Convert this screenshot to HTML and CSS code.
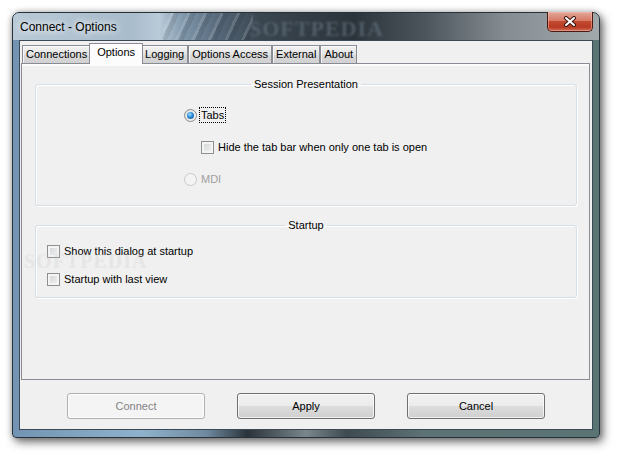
FILE: index.html
```html
<!DOCTYPE html>
<html lang="en">
<head>
    <meta charset="UTF-8">
    <title>Connect - Options</title>
    <link rel="stylesheet" href="styles.css">
</head>
<body>
    <div class="window">
        <div class="titlebar">
            <span class="title">Connect - Options</span>
            <span class="brand">SOFTPEDIA</span>
            <button class="close" type="button">
                <svg width="14" height="11" viewBox="0 0 14 11">
                    <path d="M3 2 L11 9 M11 2 L3 9" stroke="#3b1510" stroke-width="4" stroke-linecap="round"/>
                    <path d="M3 2 L11 9 M11 2 L3 9" stroke="#fff" stroke-width="2" stroke-linecap="round"/>
                </svg>
            </button>
        </div>

        <div class="client">
            <div class="tabs">
                <span class="tab">Connections</span>
                <span class="tab active">Options</span>
                <span class="tab">Logging</span>
                <span class="tab">Options Access</span>
                <span class="tab">External</span>
                <span class="tab">About</span>
            </div>

            <div class="panel">
                <fieldset class="group session">
                    <legend>Session Presentation</legend>
                    <div class="row opt">
                        <span class="radio checked"></span>
                        <span class="lbl focus">Tabs</span>
                    </div>
                    <div class="row sub">
                        <span class="check"></span>
                        <span class="lbl">Hide the tab bar when only one tab is open</span>
                    </div>
                    <div class="row opt disabled">
                        <span class="radio"></span>
                        <span class="lbl">MDI</span>
                    </div>
                </fieldset>

                <fieldset class="group startup">
                    <legend>Startup</legend>
                    <div class="row">
                        <span class="check"></span>
                        <span class="lbl">Show this dialog at startup</span>
                    </div>
                    <div class="row">
                        <span class="check"></span>
                        <span class="lbl">Startup with last view</span>
                    </div>
                    <span class="mark">SOFTPEDIA</span>
                </fieldset>
            </div>

            <div class="footer">
                <button type="button" class="btn" disabled>Connect</button>
                <button type="button" class="btn">Apply</button>
                <button type="button" class="btn">Cancel</button>
            </div>
        </div>
    </div>
</body>
</html>
```

FILE: styles.css
```css
body {
    margin: 0;
    height: 457px;
    overflow: hidden;
    background: #fff;
    font-family: "Liberation Sans", Arial, sans-serif;
    font-size: 11px;
    color: #000;
}

/* window frame */
.window {
    margin: 12px 0 0 12px;
    width: 588px;
    height: 426px;
    box-sizing: border-box;
    display: flex;
    flex-direction: column;
    padding: 0 6px 7px;
    border: 1px solid #27323b;
    border-radius: 7px 7px 4px 4px;
    background: linear-gradient(to right, #7294b2 0%, #8fb2cc 22%, #6f8aa0 33%, #2a333a 40%, #7a868c 50%, #3e4a50 57%, #5d7274 70%, #5a7474 100%);
    box-shadow: 3px 4px 10px rgba(0, 0, 0, 0.55), 0 0 6px rgba(0, 0, 0, 0.25);
}
.titlebar {
    position: relative;
    height: 27px;
    display: flex;
    align-items: center;
    justify-content: space-between;
    margin: 0 -6px;
    padding: 0 6px 0 7px;
    border-radius: 6px 6px 0 0;
    background:
        repeating-linear-gradient(115deg, rgba(255,255,255,0) 0 7px, rgba(255,255,255,0.14) 7px 10px, rgba(0,0,0,0.1) 10px 15px),
        linear-gradient(to right, #b9c9d6 0%, #a9bccc 20%, #b9cad8 25%, #8198ac 29%, #56687a 35%, #3a4650 42%, #2c343b 58%, #4b545b 70%, #858d92 84%, #a2a9ad 100%);
    background-size: 90px 100%, 100% 100%;
    background-position: 150px 0, 0 0;
    background-repeat: no-repeat;
}
.title {
    font-size: 12px;
    text-shadow: 0 0 6px #fff, 0 0 10px rgba(255, 255, 255, 0.8);
}
.brand {
    position: absolute;
    left: 236px;
    top: 3px;
    font-family: "Liberation Serif", serif;
    font-weight: bold;
    font-size: 22px;
    letter-spacing: 1px;
    color: rgba(110, 125, 140, 0.5);
    filter: blur(0.8px);
}
.close {
    align-self: flex-start;
    margin-top: -1px;
    width: 46px;
    height: 20px;
    padding: 0;
    display: flex;
    align-items: center;
    justify-content: center;
    border: 1px solid #4a1a12;
    border-top: none;
    border-radius: 0 0 5px 5px;
    background: linear-gradient(#e4a898 0%, #d77a66 45%, #c24a30 50%, #b83a22 80%, #d0705a 100%);
    box-shadow: inset 0 0 0 1px rgba(255, 200, 190, 0.45);
}

/* client area */
.client {
    flex: 1;
    display: flex;
    flex-direction: column;
    background: #f0f0f0;
    border: 1px solid #3b4856;
}
.tabs {
    display: flex;
    align-items: flex-end;
    height: 22px;
    padding-left: 2px;
}
.tab {
    height: 17px;
    line-height: 17px;
    padding: 0 3px;
    border: 1px solid #898c95;
    border-bottom: none;
    background: linear-gradient(#f2f2f2, #e3e3e3 50%, #d9d9d9 51%, #d1d1d1);
    box-shadow: inset 1px 1px 0 rgba(255, 255, 255, 0.7);
}
.tab.active {
    position: relative;
    z-index: 1;
    height: 20px;
    line-height: 17px;
    margin: 0 -2px -1px;
    padding: 0 7px;
    background: #fcfcfc;
    box-shadow: none;
}
.panel {
    flex: 1;
    margin: 0 2px 0 1px;
    padding: 14px 12px 0 13px;
    border: 1px solid #898c95;
    background: linear-gradient(#fcfcfc 0 2px, #f0f0f0 2px);
}

/* group boxes */
.group {
    position: relative;
    margin: 0;
    min-width: 0;
    display: flex;
    flex-direction: column;
    border: 1px solid #d5dfe5;
    border-radius: 3px;
    box-shadow: inset 1px 1px 0 #fff, 1px 1px 0 #fff;
}
.group legend {
    margin: 0 auto;
    padding: 0 3px;
    line-height: 13px;
}
.session {
    padding: 16px 0 18px;
    gap: 16px;
}
.session .opt {
    margin-left: 148px;
}
.session .sub {
    margin-left: 165px;
}
.startup {
    margin-top: 13px;
    padding: 11px 0 10px;
    gap: 12px;
}
.startup .row {
    margin-left: 11px;
}
.row {
    display: flex;
    align-items: center;
    gap: 3px;
    height: 16px;
}
.lbl {
    padding: 0 1px;
    line-height: 14px;
}
.focus {
    outline: 1px dotted #000;
}
.disabled .lbl {
    color: #a0a0a0;
}
.mark {
    position: absolute;
    left: -12px;
    top: 18px;
    font-family: "Liberation Serif", serif;
    font-weight: bold;
    font-size: 20px;
    letter-spacing: 1px;
    color: rgba(255, 255, 255, 0.2);
    text-shadow: 0 0 1px rgba(0, 0, 0, 0.07);
}

/* radio and check boxes */
.radio {
    width: 11px;
    height: 11px;
    border: 1px solid #8b8b8b;
    border-radius: 50%;
    background: radial-gradient(circle at 60% 60%, #fbfbfb, #d8d8d8);
    display: flex;
    align-items: center;
    justify-content: center;
}
.radio.checked::after {
    content: "";
    width: 7px;
    height: 7px;
    border-radius: 50%;
    background: radial-gradient(circle at 40% 35%, #9ee0ff 0%, #2c8ad6 45%, #0e4a8c 100%);
}
.disabled .radio {
    border-color: #c9c9c9;
    background: #f4f4f4;
}
.check {
    width: 11px;
    height: 11px;
    border: 1px solid #8e8f8f;
    background: linear-gradient(135deg, #cfd1d4, #f6f6f6);
    box-shadow: inset 0 0 0 2px #f4f4f4;
}

/* footer buttons */
.footer {
    height: 49px;
    box-sizing: border-box;
    padding-top: 13px;
    display: flex;
    justify-content: center;
    gap: 32px;
}
.btn {
    width: 138px;
    height: 26px;
    padding: 0;
    font: inherit;
    color: #000;
    border: 1px solid #707070;
    border-radius: 3px;
    background: linear-gradient(#f2f2f2 0%, #ebebeb 50%, #dddddd 51%, #cfcfcf 100%);
    box-shadow: inset 0 0 0 1px rgba(255, 255, 255, 0.7);
}
.btn:disabled {
    color: #838383;
    border-color: #adb2b5;
    background: #f4f4f4;
}
```
